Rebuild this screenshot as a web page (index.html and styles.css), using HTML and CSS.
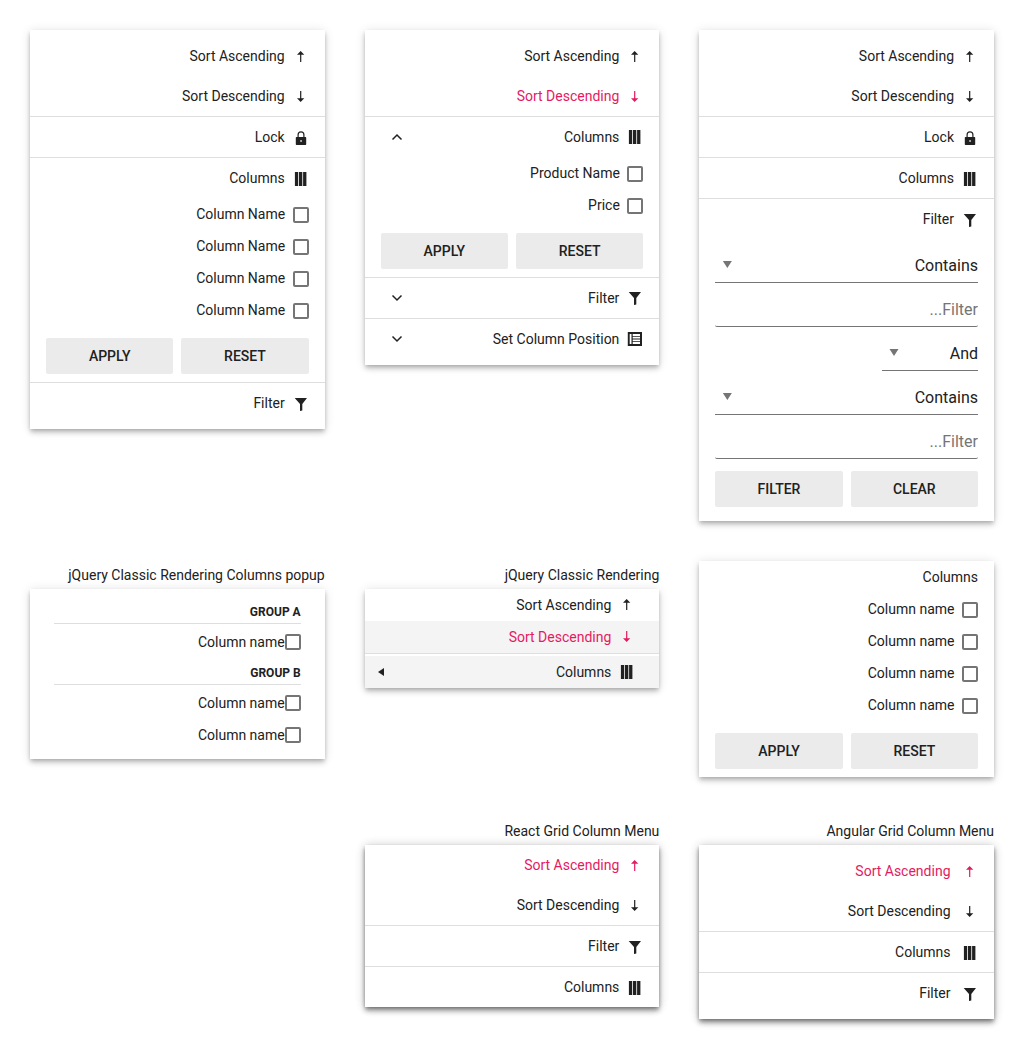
FILE: index.html
```html
<!DOCTYPE html>
<html lang="en" dir="rtl">
<head>
<meta charset="utf-8">
<title>Column Menu</title>
<link rel="stylesheet" href="styles.css">
</head>
<body>
<svg class="sprite" aria-hidden="true">
  <symbol id="up" viewBox="0 0 16 16"><path d="M7.100 13V5.700H4L7.650 2l3.650 3.700H8.300V13z"/></symbol>
  <symbol id="down" viewBox="0 0 16 16"><path d="M7.100 2v7.300H4L7.650 13l3.650-3.700H8.300V2z"/></symbol>
  <symbol id="lock" viewBox="0 0 16 16"><path fill-rule="evenodd" d="M12.500 7H11.500V4.800a3.500 3.500 0 0 0-7 0V7H3.500a.7.700 0 0 0-.7.700V14.300a.7.700 0 0 0 .7.700h9a.7.700 0 0 0 .7-.7V7.700a.7.700 0 0 0-.7-.7zM5.700 7V4.800a2.300 2.300 0 0 1 4.600 0V7zM7.300 10.200h1.500v1.500H7.300z"/></symbol>
  <symbol id="columns" viewBox="0 0 16 16"><path d="M1.900 1h3.300v14H1.900zM6 1h3.300v14H6zM10.100 1h3.300v14h-3.300z"/></symbol>
  <symbol id="filter" viewBox="0 0 16 16"><path d="M1.700 2h12.300L9.300 8v6.500L7 15V8z"/></symbol>
  <symbol id="position" viewBox="0 0 16 16"><path fill-rule="evenodd" d="M.8 1h14.200v14H.8zM2.700 3v10h1.800V3zM5.700 3v1.900H13V3zM5.700 5.700v1.900H13V5.700zM5.700 8.400v1.900H13V8.400zM5.700 11.100v1.900H13v-1.900z"/></symbol>
  <symbol id="chev-up" viewBox="0 0 16 16"><path class="stroke" d="M3.500 10.500L8 6l4.500 4.500"/></symbol>
  <symbol id="chev-down" viewBox="0 0 16 16"><path class="stroke" d="M3.500 5.500L8 10l4.500-4.500"/></symbol>
  <symbol id="left" viewBox="0 0 16 16"><path d="M11 4v8L5 8z"/></symbol>
</svg>
<main class="grid">
  <section>
    <div class="card padded">
      <div class="item"><svg class="icon"><use href="#up"/></svg>Sort Ascending</div>
      <div class="item"><svg class="icon"><use href="#down"/></svg>Sort Descending</div>
      <div class="item ruled"><svg class="icon"><use href="#lock"/></svg>Lock</div>
      <div class="item ruled"><svg class="icon"><use href="#columns"/></svg>Columns</div>
      <div class="item ruled"><svg class="icon"><use href="#filter"/></svg>Filter</div>
      <form class="filter-form">
        <div class="select"><span>Contains</span><i class="caret"></i></div>
        <input class="input" type="text" placeholder="Filter...">
        <div class="select short"><span>And</span><i class="caret"></i></div>
        <div class="select"><span>Contains</span><i class="caret"></i></div>
        <input class="input" type="text" placeholder="Filter...">
      </form>
      <div class="actions"><button>Clear</button><button>Filter</button></div>
    </div>
  </section>
  <section>
    <div class="card padded">
      <div class="item"><svg class="icon"><use href="#up"/></svg>Sort Ascending</div>
      <div class="item active"><svg class="icon"><use href="#down"/></svg>Sort Descending</div>
      <div class="item ruled expandable"><svg class="icon"><use href="#columns"/></svg>Columns<svg class="icon end"><use href="#chev-up"/></svg></div>
      <label class="check"><i class="box"></i>Product Name</label>
      <label class="check"><i class="box"></i>Price</label>
      <div class="actions"><button>Reset</button><button>Apply</button></div>
      <div class="item ruled expandable"><svg class="icon"><use href="#filter"/></svg>Filter<svg class="icon end"><use href="#chev-down"/></svg></div>
      <div class="item ruled expandable"><svg class="icon"><use href="#position"/></svg>Set Column Position<svg class="icon end"><use href="#chev-down"/></svg></div>
    </div>
  </section>
  <section>
    <div class="card padded">
      <div class="item"><svg class="icon"><use href="#up"/></svg>Sort Ascending</div>
      <div class="item"><svg class="icon"><use href="#down"/></svg>Sort Descending</div>
      <div class="item ruled"><svg class="icon"><use href="#lock"/></svg>Lock</div>
      <div class="item ruled"><svg class="icon"><use href="#columns"/></svg>Columns</div>
      <label class="check"><i class="box"></i>Column Name</label>
      <label class="check"><i class="box"></i>Column Name</label>
      <label class="check"><i class="box"></i>Column Name</label>
      <label class="check"><i class="box"></i>Column Name</label>
      <div class="actions"><button>Reset</button><button>Apply</button></div>
      <div class="item ruled"><svg class="icon"><use href="#filter"/></svg>Filter</div>
    </div>
  </section>

  <section>
    <div class="card">
      <div class="title">Columns</div>
      <label class="check"><i class="box"></i>Column name</label>
      <label class="check"><i class="box"></i>Column name</label>
      <label class="check"><i class="box"></i>Column name</label>
      <label class="check"><i class="box"></i>Column name</label>
      <div class="actions"><button>Reset</button><button>Apply</button></div>
    </div>
  </section>
  <section>
    <div class="caption">jQuery Classic Rendering</div>
    <div class="card classic">
      <div class="item"><svg class="icon"><use href="#up"/></svg>Sort Ascending</div>
      <div class="item active shaded"><svg class="icon"><use href="#down"/></svg>Sort Descending</div>
      <div class="separator"></div>
      <div class="item shaded"><svg class="icon"><use href="#columns"/></svg>Columns<svg class="icon end"><use href="#left"/></svg></div>
    </div>
  </section>
  <section>
    <div class="caption">jQuery Classic Rendering Columns popup</div>
    <div class="card popup">
      <div class="group">Group A</div>
      <label class="check"><i class="box"></i>Column name</label>
      <div class="group">Group B</div>
      <label class="check"><i class="box"></i>Column name</label>
      <label class="check"><i class="box"></i>Column name</label>
    </div>
  </section>

  <section>
    <div class="caption">Angular Grid Column Menu</div>
    <div class="card padded raised roomy">
      <div class="item active"><svg class="icon"><use href="#up"/></svg>Sort Ascending</div>
      <div class="item"><svg class="icon"><use href="#down"/></svg>Sort Descending</div>
      <div class="item ruled"><svg class="icon"><use href="#columns"/></svg>Columns</div>
      <div class="item ruled"><svg class="icon"><use href="#filter"/></svg>Filter</div>
    </div>
  </section>
  <section>
    <div class="caption">React Grid Column Menu</div>
    <div class="card raised">
      <div class="item active"><svg class="icon"><use href="#up"/></svg>Sort Ascending</div>
      <div class="item"><svg class="icon"><use href="#down"/></svg>Sort Descending</div>
      <div class="item ruled"><svg class="icon"><use href="#filter"/></svg>Filter</div>
      <div class="item ruled"><svg class="icon"><use href="#columns"/></svg>Columns</div>
    </div>
  </section>
</main>
</body>
</html>
```
FILE: styles.css
```css
* { box-sizing: border-box; }
body {
  margin: 0;
  padding: 30px;
  background: #fff;
  color: #212121;
  font: 14px/28px Roboto, sans-serif;
}
.sprite { position: absolute; width: 0; height: 0; }
.grid {
  display: grid;
  grid-template-columns: repeat(3, 1fr);
  gap: 40px;
  align-items: start;
}
.caption { height: 28px; }
.card {
  background: #fff;
  box-shadow: 0 2px 4px -1px rgba(0,0,0,.2), 0 4px 5px 0 rgba(0,0,0,.14), 0 1px 10px 0 rgba(0,0,0,.12);
}
.padded { padding: 6px 0; }
.raised {
  box-shadow: 0 2px 4px -1px rgba(0,0,0,.2), 0 4px 5px 0 rgba(0,0,0,.14), 0 1px 10px 0 rgba(0,0,0,.12),
    0 2px 4px -1px rgba(0,0,0,.2), 0 4px 5px 0 rgba(0,0,0,.14), 0 1px 10px 0 rgba(0,0,0,.12);
}
.item {
  display: flex;
  align-items: center;
  gap: 8px;
  height: 40px;
  padding: 0 16px 0 24px;
}
.ruled { height: 41px; border-top: 1px solid #dedede; }
.roomy .item { gap: 11.5px; }
.active { color: #e51a5f; }
.icon { width: 16px; height: 16px; flex: none; fill: currentColor; margin-top: 2px; }
.expandable .icon, .classic .icon { margin-top: 0; }
.end { margin-right: auto; }
.stroke { fill: none; stroke: currentColor; stroke-width: 1.5; }
.check {
  display: flex;
  align-items: center;
  gap: 7.5px;
  height: 32px;
  padding: 0 16px;
}
.box {
  width: 16px;
  height: 16px;
  margin-top: 2px;
  border: 2px solid #757575;
  border-radius: 2px;
}
.title { height: 32px; padding: 2px 16px; }
.actions { display: flex; gap: 8px; padding: 12px 16px 8px; }
button {
  flex: 1;
  height: 36px;
  padding: 0;
  border: 0;
  border-radius: 2px;
  background: #ebebeb;
  color: #212121;
  font: 500 14px/20px Roboto, sans-serif;
  text-transform: uppercase;
}
.filter-form {
  display: flex;
  flex-direction: column;
  gap: 8px;
  padding: 8px 16px 0;
}
.select {
  display: flex;
  justify-content: space-between;
  align-items: center;
  height: 36px;
  padding-left: 7px;
  border-bottom: 1px solid #757575;
  font-size: 16px;
}
.select span { padding-top: 2px; }
.short { width: 96px; }
.caret {
  width: 10px;
  height: 7px;
  background: #757575;
  clip-path: polygon(5% 0, 95% 0, 50% 100%);
}
.input {
  width: 100%;
  height: 36px;
  padding: 2px 0 0;
  border: 0;
  border-bottom: 1px solid #757575;
  border-radius: 2px;
  background: transparent;
  color: #212121;
  font: 16px/28px Roboto, sans-serif;
}
.input::placeholder { color: #757575; }
.classic .item { height: 32px; padding: 0 24px 0 8px; }
.shaded { background: #f4f4f4; }
.separator { height: 3px; border-top: 1px solid #dedede; }
.popup { padding: 8px 24px; }
.popup .check { padding: 0; gap: 0; }
.popup .box { margin-top: 0; }
.group {
  height: 27px;
  margin-bottom: 2px;
  padding-top: 4px;
  border-bottom: 1px solid #dedede;
  font: bold 12px/22px Roboto, sans-serif;
  text-transform: uppercase;
}
```
